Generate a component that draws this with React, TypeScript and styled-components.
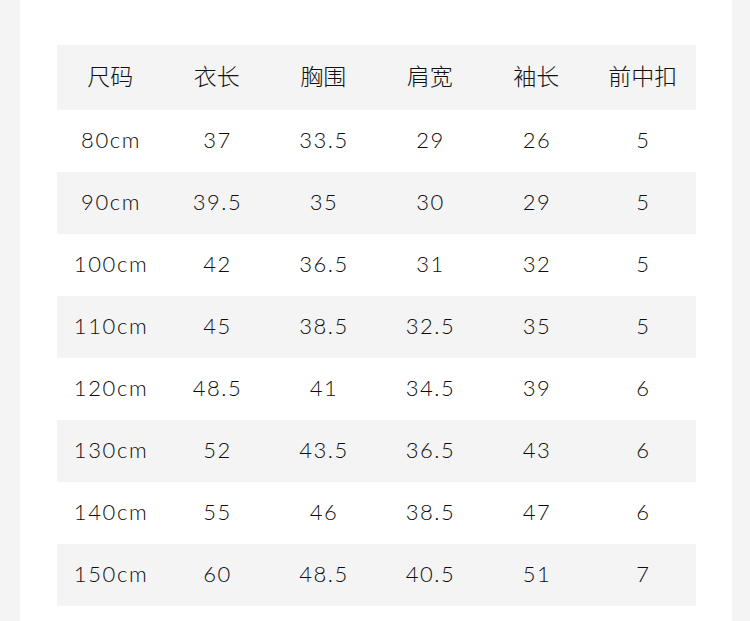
import styled, { createGlobalStyle } from 'styled-components';

const columns = ['尺码', '衣长', '胸围', '肩宽', '袖长', '前中扣'];

const rows = [
  ['80cm', '37', '33.5', '29', '26', '5'],
  ['90cm', '39.5', '35', '30', '29', '5'],
  ['100cm', '42', '36.5', '31', '32', '5'],
  ['110cm', '45', '38.5', '32.5', '35', '5'],
  ['120cm', '48.5', '41', '34.5', '39', '6'],
  ['130cm', '52', '43.5', '36.5', '43', '6'],
  ['140cm', '55', '46', '38.5', '47', '6'],
  ['150cm', '60', '48.5', '40.5', '51', '7'],
];

const GlobalStyle = createGlobalStyle`
  html, body {
    margin: 0;
    padding: 0;
    background: #f4f4f4;
  }
`;

function App() {
  return (
    <>
      <GlobalStyle />
      <Page>
        <Card>
          <Table>
            <Row $shaded $header>
              {columns.map((col) => (
                <HeadCell key={col}>{col}</HeadCell>
              ))}
            </Row>
            {rows.map((row, index) => (
              <Row key={row[0]} $shaded={index % 2 === 1}>
                {row.map((value, i) => (
                  <Cell key={i}>{value}</Cell>
                ))}
              </Row>
            ))}
          </Table>
        </Card>
      </Page>
    </>
  );
}

const Page = styled.div`
  width: 750px;
  height: 621px;
  padding: 0 18px 0 20px;
  box-sizing: border-box;
  overflow: hidden;
`;

const Card = styled.div`
  background: #fff;
  height: 100%;
  padding: 45px 36px 0 37px;
  box-sizing: border-box;
`;

const Table = styled.div`
  display: flex;
  flex-direction: column;
`;

interface RowProps {
  $shaded?: boolean;
  $header?: boolean;
}
const Row = styled.div<RowProps>`
  display: grid;
  grid-template-columns: repeat(6, 1fr);
  align-items: center;
  height: ${({ $header }) => ($header ? '65px' : '62px')};
  background: ${({ $shaded }) => ($shaded ? '#f4f4f4' : '#fff')};
`;

const HeadCell = styled.div`
  text-align: center;
  font-family: 'Noto Sans CJK SC', sans-serif;
  font-size: 23px;
  font-weight: 300;
  color: #111;
  padding-bottom: 6px;
`;

const Cell = styled.div`
  text-align: center;
  font-family: Lato, 'Noto Sans', sans-serif;
  font-size: 22px;
  font-weight: 300;
  letter-spacing: 1.6px;
  text-indent: 1.6px;
  color: #0d0d0d;
  padding-bottom: 4px;
`;

export default App;
